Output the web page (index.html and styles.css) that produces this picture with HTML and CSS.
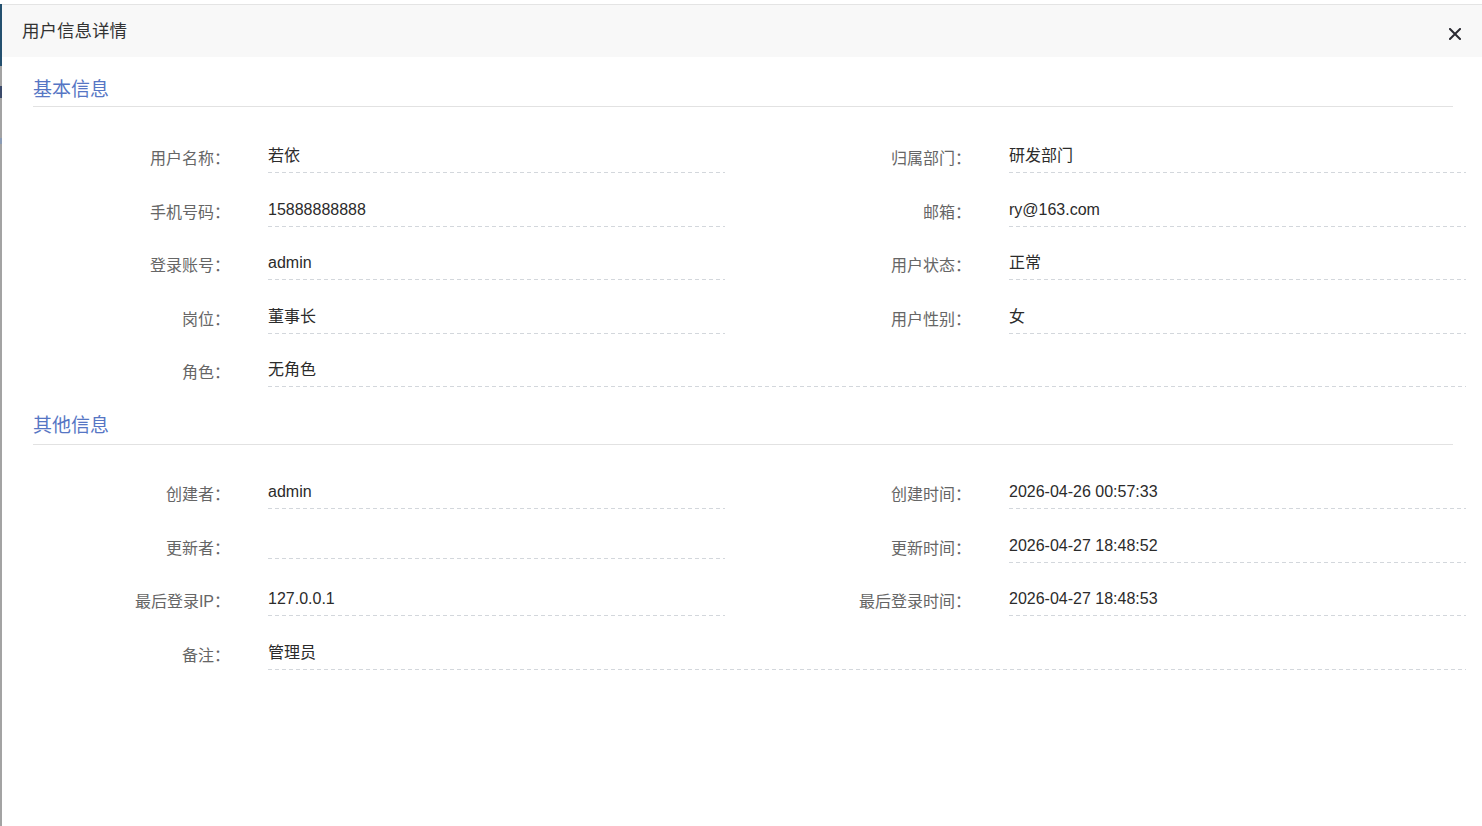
FILE: index.html
```html
<!DOCTYPE html>
<html lang="zh-CN">
<head>
<meta charset="utf-8">
<title>用户信息详情</title>
<link rel="stylesheet" href="styles.css">
</head>
<body>
<div class="page">
  <div class="backdrop-strip">
    <div class="strip-top"></div>
    <div class="strip-mark"></div>
    <div class="strip-mark light"></div>
  </div>
  <div class="dialog">
    <div class="dialog-header">
      <span class="dialog-title">用户信息详情</span>
      <span class="dialog-close" aria-label="关闭">
        <svg width="12" height="12" viewBox="0 0 12 12"><path d="M1 1 L11 11 M11 1 L1 11" stroke="#2b2b33" stroke-width="2" stroke-linecap="square" fill="none"/></svg>
      </span>
    </div>
    <div class="dialog-body">
      <h4 class="section-title">基本信息</h4>
      <div class="form-grid">
        <div class="field"><label class="field-label">用户名称：</label><div class="field-value">若依</div></div>
        <div class="field right"><label class="field-label">归属部门：</label><div class="field-value">研发部门</div></div>
        <div class="field"><label class="field-label">手机号码：</label><div class="field-value">15888888888</div></div>
        <div class="field right"><label class="field-label">邮箱：</label><div class="field-value">ry@163.com</div></div>
        <div class="field"><label class="field-label">登录账号：</label><div class="field-value">admin</div></div>
        <div class="field right"><label class="field-label">用户状态：</label><div class="field-value">正常</div></div>
        <div class="field"><label class="field-label">岗位：</label><div class="field-value">董事长</div></div>
        <div class="field right"><label class="field-label">用户性别：</label><div class="field-value">女</div></div>
        <div class="field wide"><label class="field-label">角色：</label><div class="field-value">无角色</div></div>
      </div>
      <h4 class="section-title second">其他信息</h4>
      <div class="form-grid second">
        <div class="field"><label class="field-label">创建者：</label><div class="field-value">admin</div></div>
        <div class="field right"><label class="field-label">创建时间：</label><div class="field-value">2026-04-26 00:57:33</div></div>
        <div class="field"><label class="field-label">更新者：</label><div class="field-value"></div></div>
        <div class="field right"><label class="field-label">更新时间：</label><div class="field-value">2026-04-27 18:48:52</div></div>
        <div class="field"><label class="field-label">最后登录IP：</label><div class="field-value">127.0.0.1</div></div>
        <div class="field right"><label class="field-label">最后登录时间：</label><div class="field-value">2026-04-27 18:48:53</div></div>
        <div class="field wide"><label class="field-label">备注：</label><div class="field-value">管理员</div></div>
      </div>
    </div>
  </div>
</div>
</body>
</html>
```
FILE: styles.css
```css
* { box-sizing: border-box; }
html, body {
  margin: 0;
  padding: 0;
  background: #ffffff;
  font-family: "Liberation Sans", "Noto Sans CJK SC", sans-serif;
}
.page {
  display: flex;
  width: 1482px;
  height: 826px;
  padding-top: 4px;
  overflow: hidden;
}
.backdrop-strip {
  width: 2px;
  flex: none;
  background: #a3a3a3;
  display: flex;
  flex-direction: column;
}
.strip-top {
  height: 62px;
  background: #24506f;
}
.strip-mark {
  height: 12px;
  margin-top: 20px;
  background: #3b4a6a;
}
.strip-mark.light {
  height: 6px;
  margin-top: 40px;
  background: #8a9bb5;
}
.dialog {
  flex: 1;
  border-top: 1px solid #e4e4e4;
  background: #fff;
}
.dialog-header {
  height: 52px;
  background: #f8f8f8;
  display: flex;
  align-items: center;
  justify-content: space-between;
  padding: 0 21px 0 20px;
}
.dialog-title {
  font-size: 17.5px;
  color: #333;
  line-height: 24px;
}
.dialog-close {
  display: flex;
  width: 12px;
  height: 12px;
  margin-top: 6px;
}
.dialog-body {
  padding-top: 21px;
}
.section-title {
  margin: 0 29px 0 31px;
  font-size: 19px;
  font-weight: normal;
  line-height: 24px;
  color: #5676c4;
  padding-bottom: 4px;
  border-bottom: 1px solid #e2e2e2;
}
.section-title.second {
  margin-top: 12px;
  padding-bottom: 6px;
}
.form-grid {
  display: grid;
  grid-template-columns: 739px 741px;
  padding-top: 27px;
}
.form-grid.second {
  padding-top: 25.5px;
}
.field {
  display: grid;
  grid-template-columns: 266px 1fr;
  margin-bottom: 14.5px;
  align-items: start;
}
.field.right {
  grid-template-columns: 268px 1fr;
}
.field.wide {
  grid-column: 1 / 3;
}
.field-label {
  text-align: right;
  padding: 15px 38px 3px 0;
  font-size: 16px;
  line-height: 20px;
  color: #666;
}
.field-value {
  margin-right: 16px;
  min-height: 35px;
  padding: 10px 0 5px;
  font-size: 16px;
  line-height: 24px;
  color: #2b2b2b;
  background: repeating-linear-gradient(to right, #d3d7dc 0 4px, transparent 4px 7px) left bottom / 100% 1px no-repeat;
}
```
